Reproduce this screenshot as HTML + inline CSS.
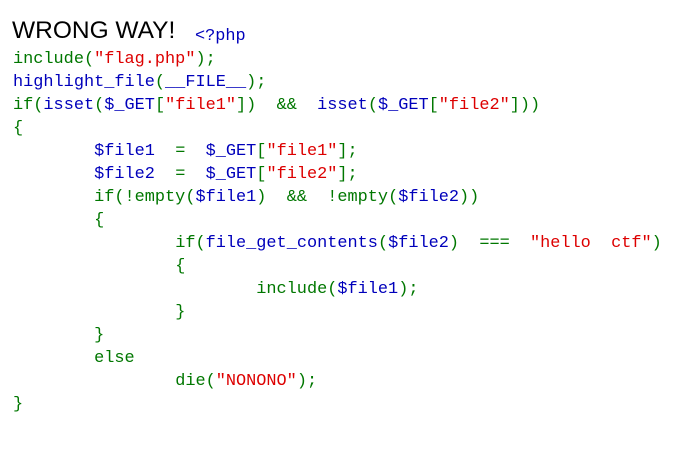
<!DOCTYPE html>
<html><head><meta charset="utf-8"><style>
html,body{margin:0;padding:0;background:#fff;width:680px;height:449px;overflow:hidden}
.w{position:absolute;left:12px;top:18px;font:24.5px "Liberation Sans",sans-serif;color:#000;line-height:26px}
.p{position:absolute;left:195px;top:25px;font:16.9px "Liberation Mono",monospace;line-height:23px;color:#0000BB}
pre{position:absolute;left:13px;top:48px;margin:0;font:16.9px "Liberation Mono",monospace;line-height:23px;tab-size:8;-moz-tab-size:8;color:#0000BB}
.g{color:#007700}.b{color:#0000BB}.r{color:#DD0000}
</style></head><body>
<div class="w">WRONG WAY!</div>
<div class="p">&lt;?php</div>
<pre><span class="g">include(</span><span class="r">"flag.php"</span><span class="g">);</span>
<span class="b">highlight_file</span><span class="g">(</span><span class="b">__FILE__</span><span class="g">);</span>
<span class="g">if(</span><span class="b">isset</span><span class="g">(</span><span class="b">$_GET</span><span class="g">[</span><span class="r">"file1"</span><span class="g">])&nbsp;&nbsp;&amp;&amp;&nbsp;&nbsp;</span><span class="b">isset</span><span class="g">(</span><span class="b">$_GET</span><span class="g">[</span><span class="r">"file2"</span><span class="g">]))</span>
<span class="g">{</span>
	<span class="b">$file1&nbsp;&nbsp;</span><span class="g">=&nbsp;&nbsp;</span><span class="b">$_GET</span><span class="g">[</span><span class="r">"file1"</span><span class="g">];</span>
	<span class="b">$file2&nbsp;&nbsp;</span><span class="g">=&nbsp;&nbsp;</span><span class="b">$_GET</span><span class="g">[</span><span class="r">"file2"</span><span class="g">];</span>
	<span class="g">if(!empty(</span><span class="b">$file1</span><span class="g">)&nbsp;&nbsp;&amp;&amp;&nbsp;&nbsp;!empty(</span><span class="b">$file2</span><span class="g">))</span>
	<span class="g">{</span>
		<span class="g">if(</span><span class="b">file_get_contents</span><span class="g">(</span><span class="b">$file2</span><span class="g">)&nbsp;&nbsp;===&nbsp;&nbsp;</span><span class="r">"hello&nbsp;&nbsp;ctf"</span><span class="g">)</span>
		<span class="g">{</span>
			<span class="g">include(</span><span class="b">$file1</span><span class="g">);</span>
		<span class="g">}</span>
	<span class="g">}</span>
	<span class="g">else</span>
		<span class="g">die(</span><span class="r">"NONONO"</span><span class="g">);</span>
<span class="g">}</span></pre>
</body></html>
